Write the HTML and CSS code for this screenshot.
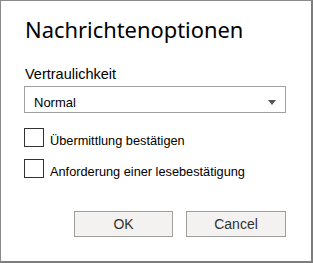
FILE: index.html
```html
<!DOCTYPE html>
<html lang="de">
<head>
<meta charset="utf-8">
<title>Nachrichtenoptionen</title>
<link rel="stylesheet" href="styles.css">
</head>
<body>
<div class="dialog">
  <h1 class="title">Nachrichtenoptionen</h1>
  <div class="field-label">Vertraulichkeit</div>
  <div class="select">
    <span class="select-value">Normal</span>
    <span class="select-arrow"></span>
  </div>
  <div class="options">
    <label class="option">
      <span class="checkbox"></span>
      <span class="option-text">Übermittlung bestätigen</span>
    </label>
    <label class="option">
      <span class="checkbox"></span>
      <span class="option-text">Anforderung einer lesebestätigung</span>
    </label>
  </div>
  <div class="actions">
    <button class="btn btn-ok">OK</button>
    <button class="btn btn-cancel">Cancel</button>
  </div>
</div>
</body>
</html>
```
FILE: styles.css
```css
html, body {
  margin: 0;
  padding: 0;
  background: #ffffff;
}

.dialog {
  width: 313px;
  height: 263px;
  box-sizing: border-box;
  border: 1px solid #8a8a8a;
  border-right: 2px solid #7d7d7d;
  border-bottom: 2px solid #7d7d7d;
  padding: 15px 25px 0 23px;
  background: #ffffff;
  font-family: "Liberation Sans", Arial, sans-serif;
  color: #000000;
}

.title {
  margin: 0 0 0 1px;
  font-family: "Noto Sans", "Open Sans", sans-serif;
  font-weight: normal;
  font-size: 21.9px;
  line-height: 28px;
  color: #000000;
}

.field-label {
  margin: 21px 0 0 1px;
  font-size: 14.5px;
  line-height: 18px;
}

.select {
  margin-top: 3px;
  width: 262px;
  height: 27px;
  box-sizing: border-box;
  border: 1px solid #a0a0a0;
  display: flex;
  align-items: flex-start;
  justify-content: space-between;
  padding: 8px 9px 0 9px;
}

.select-value {
  font-size: 13px;
  line-height: 15px;
  color: #000000;
}

.select-arrow {
  margin-top: 5px;
  width: 0;
  height: 0;
  border-left: 4.5px solid transparent;
  border-right: 4.5px solid transparent;
  border-top: 5px solid #555555;
}

.options {
  margin-top: 15px;
  display: flex;
  flex-direction: column;
  gap: 11px;
}

.option {
  display: flex;
  align-items: flex-start;
  gap: 6px;
}

.checkbox {
  width: 20px;
  height: 19px;
  box-sizing: border-box;
  border: 1px solid #333333;
  background: #ffffff;
  flex: none;
}

.option-text {
  margin-top: 5px;
  font-size: 12.75px;
  line-height: 15px;
  color: #000000;
}

.actions {
  margin-top: 32px;
  display: flex;
  justify-content: flex-end;
  gap: 13px;
}

.btn {
  height: 26px;
  box-sizing: border-box;
  border: 1px solid #a19f9d;
  background: #f3f2f1;
  color: #323130;
  font-family: "Liberation Sans", Arial, sans-serif;
  font-size: 14px;
  line-height: 16px;
  padding: 0;
  display: flex;
  align-items: center;
  justify-content: center;
  border-radius: 0;
}

.btn-ok {
  width: 99px;
}

.btn-cancel {
  width: 100px;
}
```
